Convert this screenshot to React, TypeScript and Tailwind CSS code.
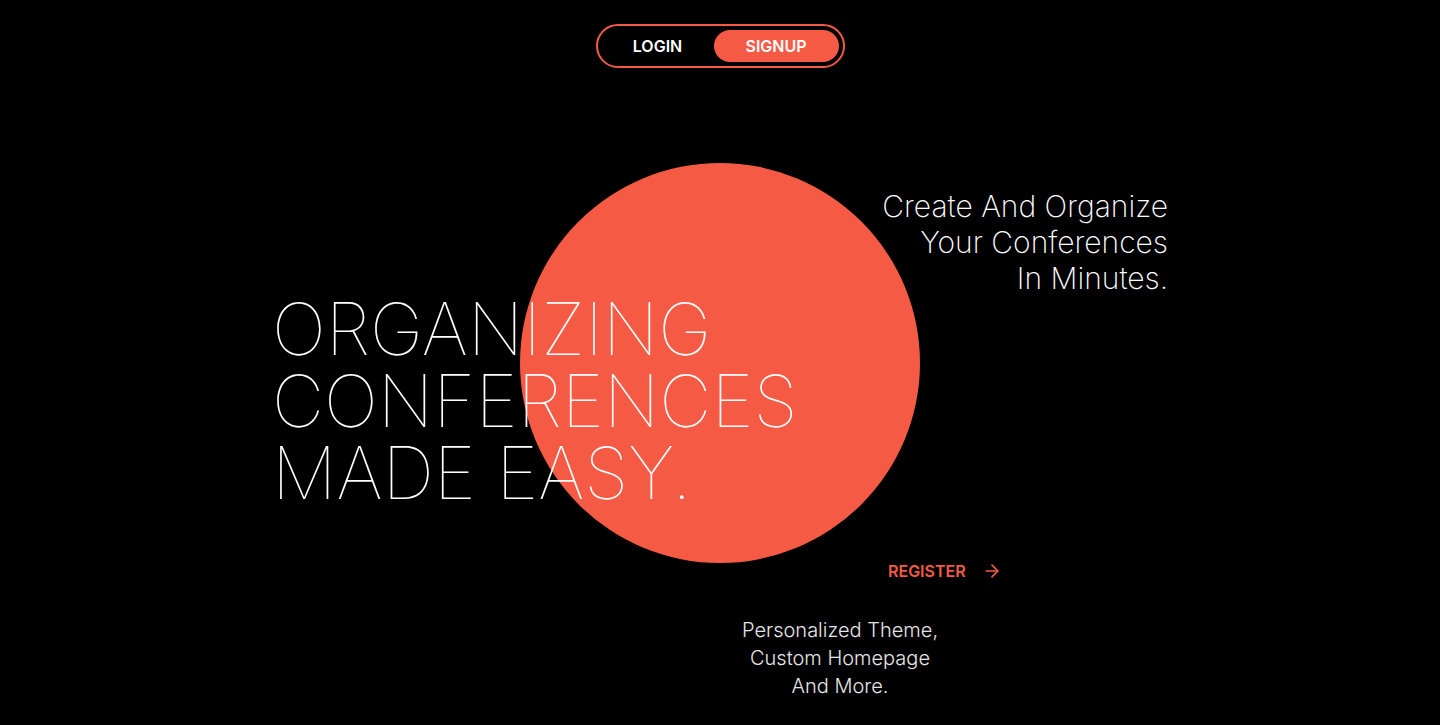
import { ArrowRight } from 'lucide-react';

const font = { fontFamily: 'Inter, "Noto Sans", sans-serif' };

function AuthToggle() {
  return (
    <div className="flex h-[44px] w-[249px] items-center rounded-full border-2 border-[#f55a45] p-[4px]">
      <button className="flex h-full flex-1 items-center justify-center text-base font-semibold text-white">
        LOGIN
      </button>
      <button className="flex h-full w-[125px] items-center justify-center rounded-full bg-[#f55a45] text-base font-semibold text-white">
        SIGNUP
      </button>
    </div>
  );
}

export default function App() {
  return (
    <div className="relative h-[725px] w-full overflow-hidden bg-black text-white" style={font}>
      {/* decorative circle */}
      <div className="absolute left-[520px] top-[163px] h-[400px] w-[400px] rounded-full bg-[#f55a45]" />

      <nav className="relative flex justify-center pt-6">
        <AuthToggle />
      </nav>

      <main className="relative mt-[120px]">
        <div className="flex items-start">
          <h1 className="ml-[272px] mt-[105px] text-[72px] font-thin uppercase leading-[72px]">
            Organizing
            <br />
            Conferences
            <br />
            Made Easy.
          </h1>
          <p className="ml-auto mr-[272px] text-right text-[30px] font-extralight leading-9">
            Create And Organize
            <br />
            Your Conferences
            <br />
            In Minutes.
          </p>
        </div>

        <a href="#" className="ml-[888px] mt-[50px] flex w-fit items-center gap-4 text-base font-semibold leading-6 text-[#f55a45]">
          REGISTER
          <ArrowRight size={20} strokeWidth={2} />
        </a>

        <p className="ml-[690px] mt-[33px] w-[300px] text-center text-xl font-light leading-7 text-[#e5e5e5]">
          Personalized Theme,
          <br />
          Custom Homepage
          <br />
          And More.
        </p>
      </main>
    </div>
  );
}
